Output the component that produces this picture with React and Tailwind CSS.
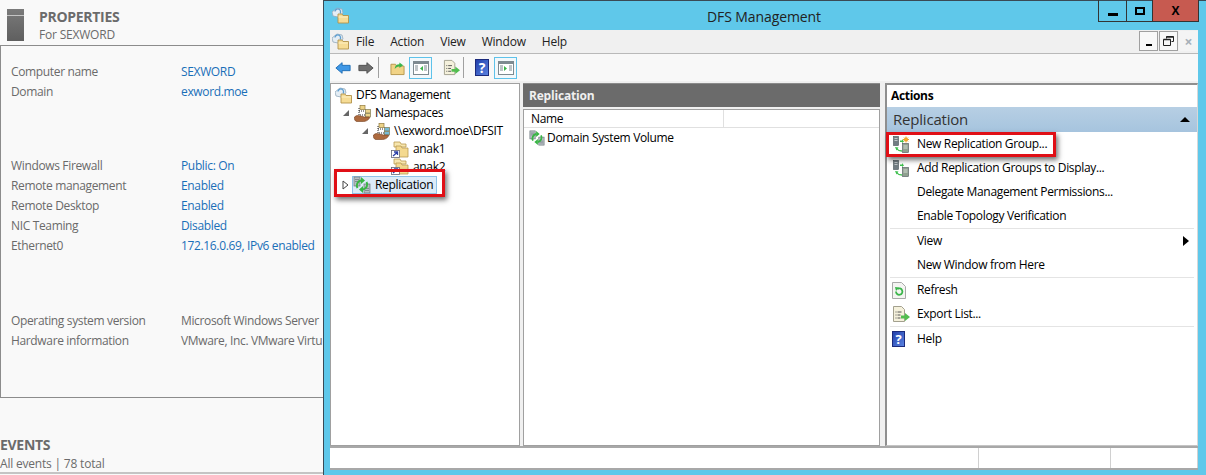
const font = { fontFamily: '"Open Sans", "Noto Sans", sans-serif' };

const FolderIcon = () => (
  <svg width="18" height="17" viewBox="0 0 18 17" className="shrink-0">
    <path d="M3 1h6l1 2h5v3H3z" fill="#f7e6ae" stroke="#b99a52" strokeWidth="0.8" />
    <path d="M5 5h5l1 2h6v9H5z" fill="#f4d98f" stroke="#b99a52" strokeWidth="0.8" />
    <rect x="0.5" y="9.5" width="8" height="7" fill="#fff" stroke="#667" strokeWidth="0.8" />
    <path d="M2 15l4-3.5M3 11h3.5v3" stroke="#2c3fa8" strokeWidth="1.3" fill="none" />
  </svg>
);

const DfsIcon = () => (
  <svg width="17" height="17" viewBox="0 0 17 17" className="shrink-0">
    <path d="M5 1l5 1 1 4-5 4-5-1-1-4z" fill="#e4edf4" stroke="#93a9bb" strokeWidth="0.8" />
    <path d="M3 4.5a2.8 2.8 0 1 1 5 2" fill="none" stroke="#5f9fd2" strokeWidth="1.3" />
    <path d="M6 7h4l1 1.5h5.5V16H6z" fill="#f6dc95" stroke="#b3934a" strokeWidth="0.9" />
    <path d="M6.5 10h9.5" stroke="#fdf0c4" />
  </svg>
);

const NamespaceIcon = ({ blue }) => (
  <svg width="17" height="17" viewBox="0 0 17 17" className="shrink-0">
    <rect x="6" y="0.5" width="5" height="4" fill="#ecd389" stroke="#927a3c" strokeWidth="0.7" />
    <rect x="11.5" y="4.5" width="5" height="3.5" fill={blue ? '#76bcd6' : '#ecd389'} stroke="#7f7a50" strokeWidth="0.7" />
    <rect x="11.5" y="8.5" width="5" height="3.5" fill={blue ? '#76bcd6' : '#ecd389'} stroke="#7f7a50" strokeWidth="0.7" />
    <path d="M5 3v7h6M5 6h6" stroke="#111" strokeWidth="0.9" strokeDasharray="1 1" fill="none" />
    <path d="M0.5 12c2-2 4-1.500 6-1l4 1h5c.5 2-3 4.500-6 4.500H3c-2 0-3-2.500-2.500-4.500z" fill="#ad6a3e" stroke="#73401f" strokeWidth="0.6" />
  </svg>
);

const ReplicationIcon = ({ size = 18 }) => (
  <svg width={size} height={size} viewBox="0 0 18 18" className="shrink-0">
    <rect x="1" y="1" width="6" height="9" fill="#b6bfc4" stroke="#6a747a" strokeWidth="0.7" />
    <path d="M2 3.500h4M2 5.500h4" stroke="#6a747a" strokeWidth="0.7" />
    <rect x="11" y="8" width="6" height="9" fill="#b6bfc4" stroke="#6a747a" strokeWidth="0.7" />
    <path d="M12 12.500h4M12 14.500h4" stroke="#6a747a" strokeWidth="0.7" />
    <path d="M4.500 12a5 5 0 0 1 3.500-7.500" fill="none" stroke="#38b544" strokeWidth="2" />
    <path d="M13.500 6a5 5 0 0 1-3.500 7.500" fill="none" stroke="#38b544" strokeWidth="2" />
    <path d="M8 1l4 3.500L8 8zM10 10v7l-4-3.500z" fill="#38b544" />
  </svg>
);

const ServerArrows = ({ star }) => (
  <svg width="18" height="17" viewBox="0 0 18 17" className="shrink-0">
    <rect x="1.500" y="0.500" width="5" height="9" fill="#717c82" stroke="#495257" strokeWidth="0.6" />
    <path d="M2.500 2.500h3M2.500 4.500h3" stroke="#d5d9db" strokeWidth="0.8" />
    <rect x="10.500" y="7.500" width="6" height="9" fill="#8fa08f" stroke="#495257" strokeWidth="0.6" />
    <path d="M11.500 10h4M11.500 12h4" stroke="#e4e8e4" strokeWidth="0.8" />
    <path d="M5 13c1 1.500 3 2 5 2" fill="none" stroke="#3fc04f" strokeWidth="1.300" />
    <path d="M3 11l3.500.5-2 3zM8 4.500h2V3l2 2.500L10 7V6H8z" fill="#3fc04f" />
    {star && (
      <g stroke="#f0a020" strokeWidth="1">
        <path d="M14 0.500v6M11 3.500h6M12 1.500l4 4M16 1.500l-4 4" />
        <circle cx="14" cy="3.500" r="1.500" fill="#f8b030" />
      </g>
    )}
  </svg>
);

const ListArrow = ({ size = 18 }) => (
  <svg width={size} height={size} viewBox="0 0 18 18" className="shrink-0">
    <path d="M1.500 1.500h8l3 3v12h-11z" fill="#f5f1dc" stroke="#a3a08e" />
    <path d="M3.500 7h1M5.500 7h4M3.500 10h1M5.500 10h3M3.500 13h1M5.500 13h3" stroke="#555" />
    <path d="M9 10.500h4V8l5 4-5 4v-2.500H9z" fill="#52bd4f" />
  </svg>
);

const RefreshIcon = () => (
  <svg width="14" height="17" viewBox="0 0 14 17" className="shrink-0">
    <path d="M.5.500h9l4 4v12H.500z" fill="#f4f4f2" stroke="#a9a9a9" />
    <path d="M4 9.500a3.200 3.200 0 1 0 1.300-2.500" fill="none" stroke="#3ab54a" strokeWidth="1.800" />
    <path d="M3 5l4 .5L4 9z" fill="#3ab54a" />
  </svg>
);

const HelpIcon = ({ size = 13 }) => (
  <div
    className="flex shrink-0 items-center justify-center border border-[#1b2a7c] bg-gradient-to-br from-[#2340ac] to-[#5b82e0] font-bold leading-none text-white"
    style={{ width: size, height: size + 3, fontSize: size }}
  >
    ?
  </div>
);

const PaneToggle = ({ right }) => (
  <div className="flex h-[22px] w-[23px] shrink-0 items-center justify-center border border-[#5ec2ea] bg-[#f2f8fb]">
    <svg width="16" height="14" viewBox="0 0 16 14">
      <rect x="0.5" y="0.5" width="15" height="13" fill="#fff" stroke="#7d8a90" />
      <rect x="1" y="1" width="14" height="2" fill="#7d8a90" />
      <path d="M2 5h3M2 7h3M2 9h3M11 5h3M11 7h3M11 9h3" stroke="#7d8a90" />
      <path d={right ? 'M6 5l3 2.500L6 10z' : 'M10 5L7 7.500l3 2.500z'} fill="#3ab54a" />
    </svg>
  </div>
);

const Row = ({ label, value, link }) => (
  <div className="flex h-5 items-center whitespace-nowrap text-[12px] tracking-[-0.35px]">
    <div className="w-[170px] shrink-0 text-[#6a6a6a]">{label}</div>
    <div className={link ? 'text-[#1a6fb8]' : 'text-[#6a6a6a]'}>{value}</div>
  </div>
);

const Expanded = () => (
  <svg width="8" height="8" viewBox="0 0 8 8" className="shrink-0">
    <path d="M7 1v6H1z" fill="#666" />
  </svg>
);

const TreeRow = ({ indent, expander, icon, label, height = 18 }) => (
  <div className="flex items-center gap-1 whitespace-nowrap" style={{ paddingLeft: indent, height }}>
    {expander}
    {icon}
    <span>{label}</span>
  </div>
);

const Action = ({ icon, label, arrow }) => (
  <div className="flex h-6 items-center pr-[8px] pl-[5px]">
    <div className="flex w-[25px] shrink-0 justify-start">{icon}</div>
    <span className="flex-1 whitespace-nowrap">{label}</span>
    {arrow && <div className="h-0 w-0 border-y-[5px] border-l-[6px] border-y-transparent border-l-black" />}
  </div>
);

const Divider = () => <div className="mx-[3px] h-px bg-[#e4e4e4]" />;

const RedBox = ({ className }) => (
  <div className={`pointer-events-none absolute border-[3px] border-[#e00f16] shadow-[2px_3px_5px_rgba(0,0,0,0.55)] ${className}`} />
);

const App = () => {
  return (
    <div className="flex h-[475px] w-[1206px] overflow-hidden bg-[#f9f9f9] text-[12px]" style={font}>
      {/* Server manager behind the window */}
      <div className="flex w-[323px] shrink-0 flex-col overflow-hidden">
        <div className="flex h-[45px] shrink-0 pt-[9px] pl-[7px]">
          <div className="h-[32px] w-[17px] bg-gradient-to-b from-[#7a7a7a] to-[#5f5f5f] pt-[6px]">
            <div className="h-px bg-[#c4c4c4]" />
          </div>
          <div className="ml-[15px] -mt-px">
            <div className="text-[14px] leading-[18px] font-bold tracking-[-0.3px] text-[#6b6b6b]">PROPERTIES</div>
            <div className="text-[12px] leading-[17px] tracking-[-0.2px] text-[#6b6b6b]">For SEXWORD</div>
          </div>
        </div>
        <div className="h-[353px] shrink-0 border-y-[1.5px] border-l border-[#8c8c8c] pt-[16px] pl-[10px]">
          <Row label="Computer name" value="SEXWORD" link />
          <Row label="Domain" value="exword.moe" link />
          <div className="h-[54px]" />
          <Row label="Windows Firewall" value="Public: On" link />
          <Row label="Remote management" value="Enabled" link />
          <Row label="Remote Desktop" value="Enabled" link />
          <Row label="NIC Teaming" value="Disabled" link />
          <Row label="Ethernet0" value="172.16.0.69, IPv6 enabled" link />
          <div className="h-[55px]" />
          <Row label="Operating system version" value="Microsoft Windows Server" />
          <Row label="Hardware information" value="VMware, Inc. VMware Virtu" />
        </div>
        <div className="mt-[39px] text-[14px] leading-[16px] font-bold tracking-[-0.3px] text-[#6b6b6b]">EVENTS</div>
        <div className="mt-[3px] text-[12px] leading-[16px] tracking-[-0.2px] text-[#6b6b6b]">All events | 78 total</div>
        <div className="h-[2px] bg-[#c4c4c4]" />
      </div>

      {/* DFS Management window */}
      <div className="relative flex min-w-0 flex-1 flex-col border-t border-l border-[#3a4a55] bg-[#5fc8ea] pr-[8px] pb-[5px] pl-[6px] text-black">
        <div className="relative flex h-[29px] shrink-0 items-start pt-[6px] pl-[2px]">
          <DfsIcon />
          <div className="absolute inset-x-0 top-[6px] text-center text-[14px] leading-5 tracking-[-0.1px] text-[#222]">DFS Management</div>
          <div className="absolute -top-[1px] right-[-1px] flex h-[22px] border border-t-0 border-[#333]">
            <div className="flex w-[28px] items-end justify-center border-r border-[#333] pb-[5px]">
              <div className="h-[3px] w-[10px] bg-black" />
            </div>
            <div className="flex w-[26px] items-center justify-center border-r border-[#333]">
              <div className="h-[8px] w-[10px] border-2 border-black" />
            </div>
            <div className="flex w-[45px] items-center justify-center bg-[#c75a50] text-[12px] leading-none font-bold text-black">X</div>
          </div>
        </div>

        {/* Menu bar */}
        <div className="relative flex h-[24px] shrink-0 items-center border-b border-[#b9b9b9] bg-[#f0f0f0] pl-[2px]">
          <DfsIcon />
          <div className="ml-[7px] flex gap-[16px] tracking-[-0.2px] text-[#222]">
            <span>File</span>
            <span>Action</span>
            <span>View</span>
            <span>Window</span>
            <span>Help</span>
          </div>
          <div className="absolute top-[1px] right-0 flex h-[20px] gap-px">
            <div className="flex w-[19px] items-end justify-center border border-[#a0a0a0] bg-[#f8f8f8] pb-[4px]">
              <div className="h-[2px] w-[6px] bg-black" />
            </div>
            <div className="flex w-[19px] items-center justify-center border border-[#a0a0a0] bg-[#f8f8f8]">
              <svg width="11" height="10" viewBox="0 0 11 10">
                <path d="M3.500 2.500v-2h7v5h-2M.5 3.500h7v6h-7z" fill="none" stroke="#222" />
                <path d="M.5 3.500h7M3.500 1h7" stroke="#222" strokeWidth="1.500" />
              </svg>
            </div>
            <div className="flex w-[19px] items-center justify-center bg-[#f4f4f4] text-[14px] font-bold text-[#a6b0b8]">×</div>
          </div>
        </div>

        {/* Toolbar */}
        <div className="flex h-[27px] shrink-0 items-center bg-[#f8f8f8]">
          <svg width="16" height="14" viewBox="0 0 18 14" className="ml-[5px] shrink-0">
            <path d="M1 7l7-6v3h9v6H8v3z" fill="#3e97e6" stroke="#1b6ab2" />
          </svg>
          <svg width="16" height="14" viewBox="0 0 18 14" className="ml-[7px] shrink-0">
            <path d="M17 7l-7-6v3H1v6h9v3z" fill="#6f6f6f" stroke="#4a4a4a" />
          </svg>
          <div className="ml-[4px] h-[21px] w-px bg-[#a0a0a0]" />
          <svg width="15" height="16" viewBox="0 0 16 16" className="ml-[11px] shrink-0">
            <path d="M1 4h5l1 2h8v9H1z" fill="#f1d386" stroke="#b5964c" />
            <path d="M5 9c0-3 2-5 5-5V2l4 3-4 3V6c-2 0-3 1-5 3z" fill="#3ab54a" />
          </svg>
          <div className="ml-[4px]"><PaneToggle /></div>
          <div className="ml-[11px]"><ListArrow size={17} /></div>
          <div className="ml-[3px] h-[21px] w-px bg-[#a0a0a0]" />
          <div className="ml-[11px]"><HelpIcon size={14} /></div>
          <div className="ml-[5px]"><PaneToggle right /></div>
        </div>

        {/* Panes */}
        <div className="flex min-h-0 flex-1 gap-[3px] bg-[#f0f0f0] pt-[2px]">
          <div className="relative w-[190px] shrink-0 border border-[#a0a0a0] bg-white pt-[2px] pl-[1px] text-[12px] tracking-[-0.33px]">
            <TreeRow indent={3} icon={<DfsIcon />} label="DFS Management" />
            <TreeRow indent={10} expander={<Expanded />} icon={<NamespaceIcon />} label="Namespaces" />
            <TreeRow indent={29} expander={<Expanded />} icon={<NamespaceIcon blue />} label="\\exword.moe\DFSIT" height={18} />
            <TreeRow indent={59} icon={<FolderIcon />} label="anak1" height={18} />
            <TreeRow indent={59} icon={<FolderIcon />} label="anak2" height={17} />
            <div className="flex h-[20px] items-center pl-[10px]">
              <svg width="7" height="10" viewBox="0 0 7 10" className="shrink-0">
                <path d="M1 1l5 4-5 4z" fill="#fff" stroke="#444" />
              </svg>
              <div className="ml-[3px] flex h-[18px] items-center gap-1 border border-[#8fc3e8] bg-[#dcebf8] pr-[3px]">
                <ReplicationIcon />
                <span>Replication</span>
              </div>
            </div>
            <RedBox className="top-[85px] left-[3px] h-[28px] w-[111px]" />
          </div>

          <div className="flex w-[357px] shrink-0 flex-col">
            <div className="flex h-[24px] shrink-0 items-center border-t border-[#8a8a8a] bg-[#6b6b6b] pl-[6px] font-bold tracking-[-0.2px] text-[#f0f0f0]">Replication</div>
            <div className="mt-[2px] flex-1 border border-[#a0a0a0] bg-white tracking-[-0.33px]">
              <div className="flex h-[18px] items-center border-b border-[#e0e0e0]">
                <div className="h-full w-[200px] border-r border-[#e0e0e0] pl-[7px]">Name</div>
              </div>
              <div className="flex h-[20px] items-center gap-[2px] pl-[5px]">
                <ReplicationIcon size={16} />
                <span>Domain System Volume</span>
              </div>
            </div>
          </div>

          <div className="relative ml-[2px] flex flex-1 flex-col border-t-2 border-r border-b border-l-2 border-[#8f8f8f] border-r-[#d8d8d8] border-b-[#c4c4c4] bg-white tracking-[-0.33px]">
            <div className="flex h-[22px] shrink-0 items-center pl-[4px] font-bold">Actions</div>
            <div className="flex h-[25px] shrink-0 items-center justify-between bg-gradient-to-b from-[#b7cfe4] to-[#a6c4de] pr-[7px] pl-[6px] text-[15px] tracking-[-0.2px] text-[#333]">
              <span>Replication</span>
              <div className="h-0 w-0 border-x-[5px] border-b-[5px] border-x-transparent border-b-black" />
            </div>
            <Action icon={<ServerArrows star />} label="New Replication Group..." />
            <Action icon={<ServerArrows />} label="Add Replication Groups to Display..." />
            <Action label="Delegate Management Permissions..." />
            <Action label="Enable Topology Verification" />
            <Divider />
            <Action label="View" arrow />
            <Action label="New Window from Here" />
            <Divider />
            <Action icon={<RefreshIcon />} label="Refresh" />
            <Action icon={<ListArrow />} label="Export List..." />
            <Divider />
            <Action icon={<HelpIcon />} label="Help" />
            <RedBox className="top-[47px] -left-[1px] h-[25px] w-[170px]" />
          </div>
        </div>

        {/* Status bar */}
        <div className="flex h-[24px] shrink-0 border-t-2 border-b-2 border-[#a8a8a8] bg-white">
          <div className="flex-1 border-r border-[#d0d0d0]" />
          <div className="w-[132px] border-r border-[#d0d0d0]" />
          <div className="w-[87px] border-r border-[#d0d0d0]" />
        </div>
      </div>
    </div>
  );
};

export default App;
